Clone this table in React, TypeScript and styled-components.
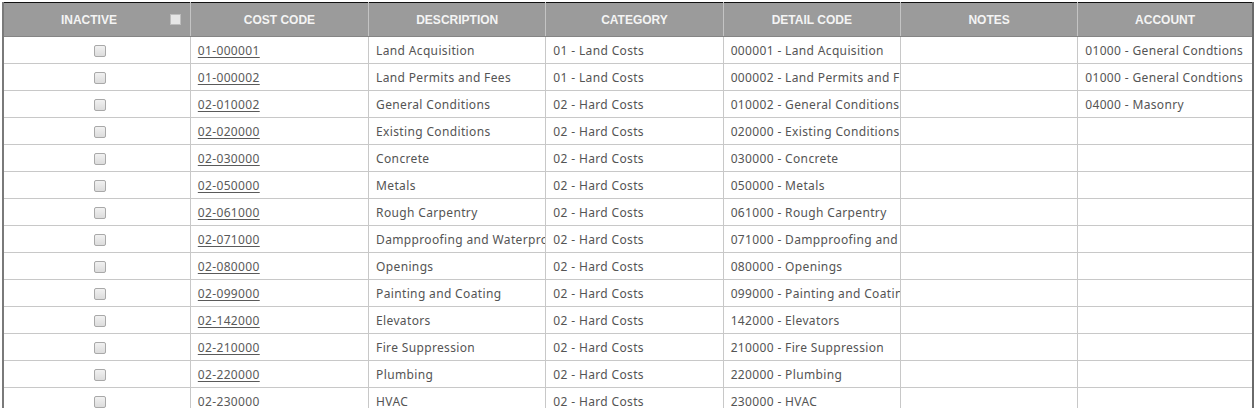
import React from 'react';
import styled, { createGlobalStyle } from 'styled-components';

const Global = createGlobalStyle`
  body {
    margin: 0;
    background: #fff;
  }
`;

const Page = styled.div`
  padding: 2px 0 0 2px;
  width: 1255px;
`;

const Grid = styled.table`
  width: 1252px;
  table-layout: fixed;
  border-collapse: collapse;
  border-top: 1px solid #111;
  border-left: 2px solid #7a7a7a;
  border-right: 2px solid #6a6a6a;
`;

const Head = styled.th`
  height: 34px;
  padding: 10px 0 0;
  background: #9b9b9b;
  color: #f4f4f4;
  font-family: 'Liberation Sans', Arial, sans-serif;
  font-size: 12px;
  font-weight: bold;
  text-align: center;
  vertical-align: top;
  box-sizing: border-box;
  border-right: 1px solid #c4c4c4;
  border-bottom: 1px solid #858585;
  &:last-child {
    border-right: none;
  }
`;

const HeadInner = styled.div`
  display: flex;
  align-items: center;
  justify-content: center;
  position: relative;
`;

const HeadLabel = styled.span<{ $shift?: number }>`
  margin-left: ${p => p.$shift ?? 0}px;
`;

const HeadBox = styled.span`
  position: absolute;
  right: 9px;
  top: 1px;
  width: 9px;
  height: 9px;
  background: #e6e6e6;
  border: 1px solid #bdbdbd;
`;

const Cell = styled.td<{ $center?: boolean }>`
  height: 26px;
  padding: 0 0 0 7px;
  font-family: 'Noto Sans', 'Open Sans', sans-serif;
  font-size: 12px;
  letter-spacing: 0.35px;
  color: #545454;
  white-space: nowrap;
  overflow: hidden;
  text-align: ${p => (p.$center ? 'center' : 'left')};
  border-right: 1px solid #c8c8c8;
  border-bottom: 1px solid #c8c8c8;
  &:last-child {
    border-right: none;
  }
`;

const CodeLink = styled.a`
  color: #5a5a5a;
  text-decoration: underline;
  text-underline-offset: 2px;
`;

const Check = styled.span`
  display: inline-block;
  width: 10px;
  height: 10px;
  vertical-align: middle;
  border: 1px solid #a9a9a9;
  border-radius: 2px;
  background: linear-gradient(#f1f1f1, #dcdcdc);
`;

const widths = [187, 178, 177, 177, 177, 177, 175];

const rows = [
  ['01-000001', 'Land Acquisition', '01 - Land Costs', '000001 - Land Acquisition', '', '01000 - General Condtions'],
  ['01-000002', 'Land Permits and Fees', '01 - Land Costs', '000002 - Land Permits and Fees', '', '01000 - General Condtions'],
  ['02-010002', 'General Conditions', '02 - Hard Costs', '010002 - General Conditions', '', '04000 - Masonry'],
  ['02-020000', 'Existing Conditions', '02 - Hard Costs', '020000 - Existing Conditions', '', ''],
  ['02-030000', 'Concrete', '02 - Hard Costs', '030000 - Concrete', '', ''],
  ['02-050000', 'Metals', '02 - Hard Costs', '050000 - Metals', '', ''],
  ['02-061000', 'Rough Carpentry', '02 - Hard Costs', '061000 - Rough Carpentry', '', ''],
  ['02-071000', 'Dampproofing and Waterproofing', '02 - Hard Costs', '071000 - Dampproofing and Waterproofing', '', ''],
  ['02-080000', 'Openings', '02 - Hard Costs', '080000 - Openings', '', ''],
  ['02-099000', 'Painting and Coating', '02 - Hard Costs', '099000 - Painting and Coating', '', ''],
  ['02-142000', 'Elevators', '02 - Hard Costs', '142000 - Elevators', '', ''],
  ['02-210000', 'Fire Suppression', '02 - Hard Costs', '210000 - Fire Suppression', '', ''],
  ['02-220000', 'Plumbing', '02 - Hard Costs', '220000 - Plumbing', '', ''],
  ['02-230000', 'HVAC', '02 - Hard Costs', '230000 - HVAC', '', ''],
];

const headers = ['COST CODE', 'DESCRIPTION', 'CATEGORY', 'DETAIL CODE', 'NOTES', 'ACCOUNT'];

export default function App() {
  return (
    <Page>
      <Global />
      <Grid>
        <colgroup>
          {widths.map((w, i) => (
            <col key={i} style={{ width: w }} />
          ))}
        </colgroup>
        <thead>
          <tr>
            <Head>
              <HeadInner>
                <HeadLabel $shift={-16}>INACTIVE</HeadLabel>
                <HeadBox />
              </HeadInner>
            </Head>
            {headers.map(h => (
              <Head key={h}>{h}</Head>
            ))}
          </tr>
        </thead>
        <tbody>
          {rows.map(r => (
            <tr key={r[0]}>
              <Cell $center>
                <Check />
              </Cell>
              <Cell>
                <CodeLink href="#">{r[0]}</CodeLink>
              </Cell>
              <Cell>{r[1]}</Cell>
              <Cell>{r[2]}</Cell>
              <Cell>{r[3]}</Cell>
              <Cell>{r[4]}</Cell>
              <Cell>{r[5]}</Cell>
            </tr>
          ))}
        </tbody>
      </Grid>
    </Page>
  );
}
